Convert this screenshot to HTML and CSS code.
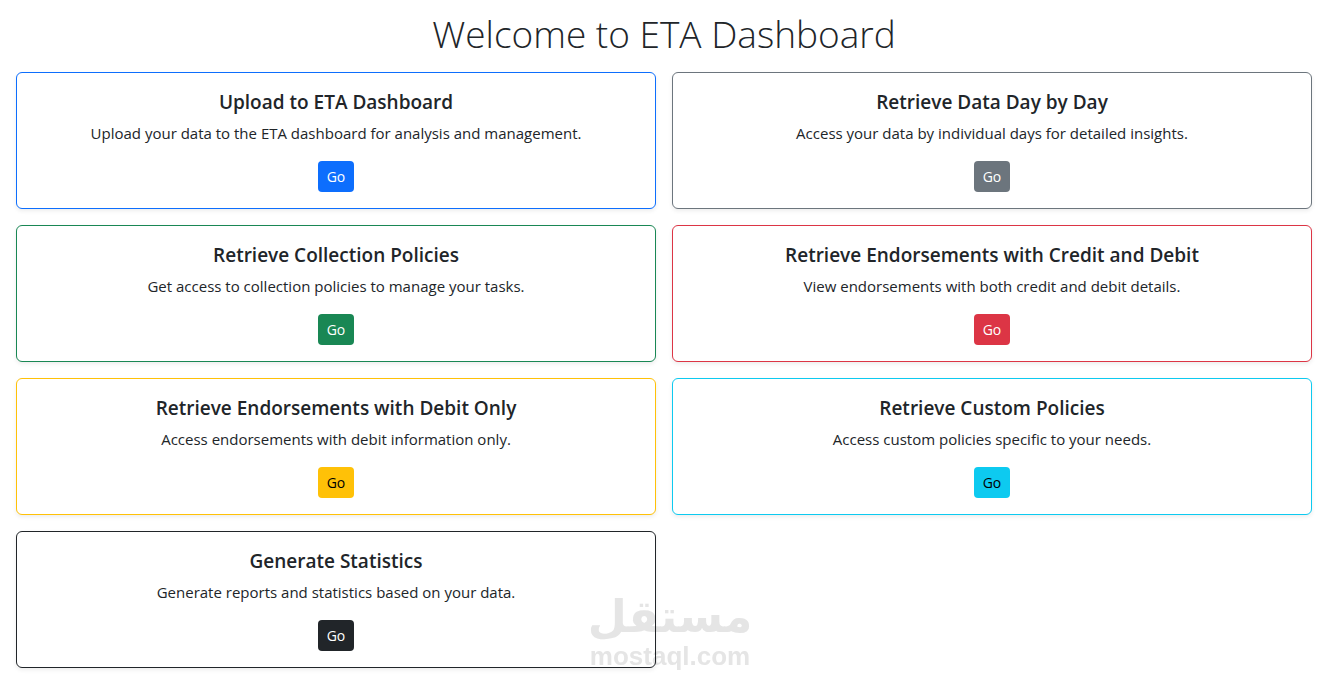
FILE: index.html
```html
<!DOCTYPE html>
<html lang="en">
<head>
    <meta charset="UTF-8">
    <meta name="viewport" content="width=device-width, initial-scale=1.0">
    <title>ETA Dashboard</title>
    <link rel="stylesheet" href="styles.css">
</head>
<body>
<h1 class="page-title">Welcome to ETA Dashboard</h1>

<main class="cards">
    <div class="card primary">
        <h2 class="card-title">Upload to ETA Dashboard</h2>
        <p class="card-text">Upload your data to the ETA dashboard for analysis and management.</p>
        <a href="#upload" class="btn">Go</a>
    </div>
    <div class="card secondary">
        <h2 class="card-title">Retrieve Data Day by Day</h2>
        <p class="card-text">Access your data by individual days for detailed insights.</p>
        <a href="#days" class="btn">Go</a>
    </div>
    <div class="card success">
        <h2 class="card-title">Retrieve Collection Policies</h2>
        <p class="card-text">Get access to collection policies to manage your tasks.</p>
        <a href="#collection" class="btn">Go</a>
    </div>
    <div class="card danger">
        <h2 class="card-title">Retrieve Endorsements with Credit and Debit</h2>
        <p class="card-text">View endorsements with both credit and debit details.</p>
        <a href="#credit-debit" class="btn">Go</a>
    </div>
    <div class="card warning">
        <h2 class="card-title">Retrieve Endorsements with Debit Only</h2>
        <p class="card-text">Access endorsements with debit information only.</p>
        <a href="#debit" class="btn">Go</a>
    </div>
    <div class="card info">
        <h2 class="card-title">Retrieve Custom Policies</h2>
        <p class="card-text">Access custom policies specific to your needs.</p>
        <a href="#custom" class="btn">Go</a>
    </div>
    <div class="card dark">
        <h2 class="card-title">Generate Statistics</h2>
        <p class="card-text">Generate reports and statistics based on your data.</p>
        <a href="#statistics" class="btn">Go</a>
    </div>
</main>

<!-- watermark -->
<div class="watermark">
    <span class="mark-ar" lang="ar" dir="rtl">مستقل</span>
    <span class="mark-en">mostaql.com</span>
</div>
</body>
</html>
```

FILE: styles.css
```css
* {
    box-sizing: border-box;
}
body {
    margin: 0;
    padding: 10px 28px 16px 16px;
    background-color: #fff;
    color: #212529;
    font-family: "Segoe UI", "Open Sans", sans-serif;
    font-size: 15px;
    line-height: 24px;
}
.page-title {
    margin: 0 0 14px;
    font-size: 37px;
    font-weight: 300;
    line-height: 48px;
    text-align: center;
}
.cards {
    display: grid;
    grid-template-columns: 1fr 1fr;
    gap: 16px;
}
.card {
    --color: #0d6efd;
    --label: #fff;
    padding: 16px;
    border: 1px solid var(--color);
    border-radius: 6px;
    background-color: #fff;
    box-shadow: 0 2px 4px rgba(0, 0, 0, 0.075);
    text-align: center;
}
.card-title {
    margin: 0 0 6px;
    font-size: 19px;
    font-weight: 600;
    line-height: 26px;
}
.card-text {
    margin: 0 0 16px;
}
.btn {
    display: block;
    width: 36px;
    margin: 0 auto;
    padding: 5px 0;
    border-radius: 4px;
    background-color: var(--color);
    color: var(--label);
    font-size: 14px;
    line-height: 21px;
    text-decoration: none;
}

.secondary { --color: #6c757d; }
.success { --color: #198754; }
.danger { --color: #dc3545; }
.warning { --color: #ffc107; --label: #000; }
.info { --color: #0dcaf0; --label: #000; }
.dark { --color: #212529; }

.watermark {
    position: fixed;
    left: 50%;
    bottom: 14px;
    width: 164px;
    margin-left: -82px;
    display: flex;
    flex-direction: column;
    align-items: center;
    color: #e5e5e5;
    font-weight: bold;
    mix-blend-mode: multiply;
    pointer-events: none;
}
.mark-ar {
    font-family: "DejaVu Sans", sans-serif;
    font-size: 45px;
    line-height: 50px;
}
.mark-en {
    font-family: "Liberation Sans", Arial, sans-serif;
    font-size: 26px;
    line-height: 28px;
}
```
